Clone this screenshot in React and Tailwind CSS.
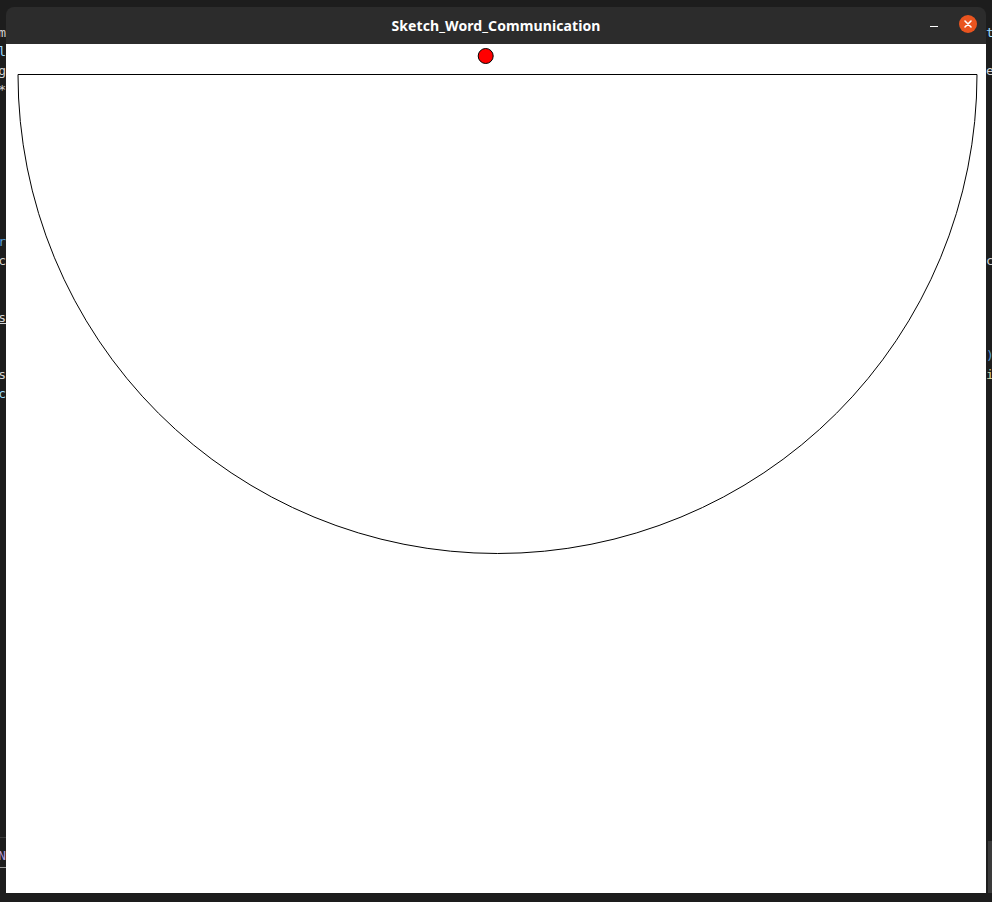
import React from "react";

const leftRows = {
  0: { ch: "m", c: "text-[#d4d4d4]" },
  1: { ch: "l", c: "text-[#9cdcfe]" },
  2: { ch: "g", c: "text-[#d4d4d4]" },
  3: { ch: "*", c: "text-[#d4d4d4]" },
  11: { ch: "r", c: "text-[#569cd6]" },
  12: { ch: "c", c: "text-[#d4d4d4]" },
  15: { ch: "s", c: "text-[#d4d4d4] underline" },
  18: { ch: "s", c: "text-[#d4d4d4]" },
  19: { ch: "c", c: "text-[#9cdcfe]" },
};
const rightRows = {
  0: { ch: "t", c: "text-[#9cdcfe]" },
  2: { ch: "e", c: "text-[#d4d4d4]" },
  12: { ch: "c", c: "text-[#d4d4d4]" },
  17: { ch: ")", c: "text-[#569cd6]" },
  18: { ch: "i", c: "text-[#dcdcaa]" },
};

function Strip({ rows, align }) {
  const items = [];
  for (let i = 0; i < 21; i++) {
    const r = rows[i];
    items.push(
      <div
        key={i}
        className={`h-[19px] leading-[19px] text-[13px] flex ${align === "right" ? "justify-end" : "justify-start"}`}
      >
        {r ? <span className={r.c}>{r.ch}</span> : null}
      </div>
    );
  }
  return (
    <div
      className="w-[6px] overflow-hidden flex flex-col pt-[23px]"
      style={{ fontFamily: '"DejaVu Sans Mono", monospace' }}
    >
      {items}
    </div>
  );
}

export default function App() {
  return (
    <div className="w-[992px] h-[902px] bg-[#1d1d1d] overflow-hidden flex">
      <div className="flex flex-col">
        <Strip rows={leftRows} align="right" />
        <div className="mt-auto mb-[9px] w-[6px] flex flex-col">
          <div className="h-px bg-[#3a3a3a] mb-[8px]" />
          <div
            className="h-[19px] leading-[19px] text-[13px] text-[#b4a0e0] flex justify-end overflow-hidden"
            style={{ fontFamily: '"DejaVu Sans Mono", monospace' }}
          >
            N
          </div>
          <div className="h-px bg-[#9a9a9a] mt-[2px] mb-[25px]" />
        </div>
      </div>
      <div className="w-[980px] pt-[7px] flex flex-col">
        <div className="h-[37px] bg-[#2c2c2c] rounded-t-[8px] flex items-center relative">
          <div
            className="flex-1 text-center text-white font-bold text-[14px] tracking-[0.1px]"
            style={{ fontFamily: '"Noto Sans", sans-serif' }}
          >
            Sketch_Word_Communication
          </div>
          <div className="absolute right-[9px] top-[8px] flex items-center gap-[21px]">
            <div className="w-[8px] h-[1.5px] bg-white mt-[5px]" />
            <div className="w-[18px] h-[18px] rounded-full bg-[#e9541f] flex items-center justify-center">
              <svg width="10" height="10" viewBox="0 0 10 10">
                <path d="M2 2 L8 8 M8 2 L2 8" stroke="white" strokeWidth="1.6" strokeLinecap="round" />
              </svg>
            </div>
          </div>
        </div>
        <div className="h-[849px] bg-white">
          <svg width="980" height="849" viewBox="0 0 980 849">
            <path
              d="M 12 30.5 L 971 30.5 A 479.5 479 0 0 1 12 30.5 Z"
              fill="white"
              stroke="black"
              strokeWidth="1"
            />
            <circle cx="479.7" cy="12" r="7.5" fill="#ff0000" stroke="black" strokeWidth="1" />
          </svg>
        </div>
      </div>
      <div className="flex flex-col">
        <Strip rows={rightRows} align="left" />
        <div className="mt-auto mb-[9px] w-[6px] h-[52px] flex justify-end">
          <div className="w-[4px] h-full bg-[#3a3a3a]" />
        </div>
      </div>
    </div>
  );
}
